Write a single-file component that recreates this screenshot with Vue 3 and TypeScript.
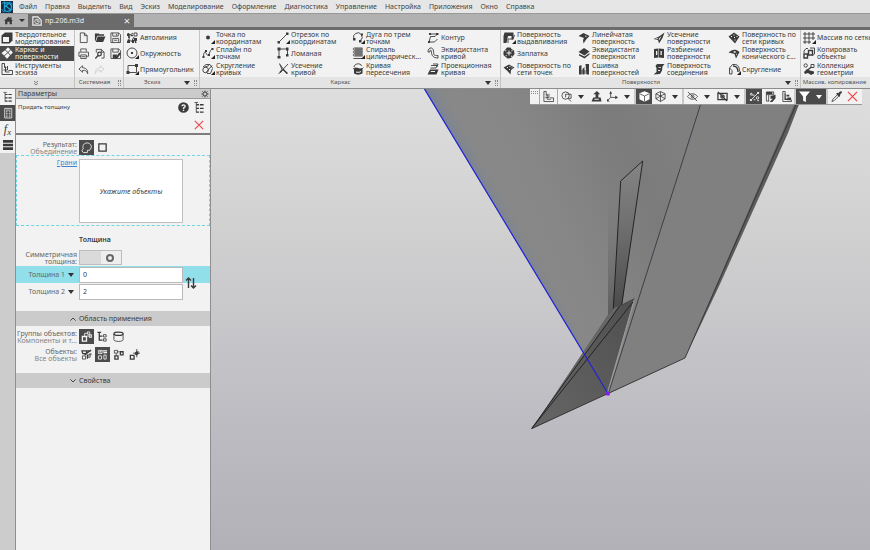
<script setup lang="ts">
import { h, ref, type FunctionalComponent } from 'vue'

interface Glyph {
  /** outlined strokes */
  s?: string
  /** solid shapes */
  f?: string
  /** light details over solid shapes */
  w?: string
  /** heavier stroke */
  b?: string
  /** dark seams over light shapes */
  k?: string
}

const glyphs: Record<string, Glyph> = {
  solid: { f: 'M4 0.5h7.500v8L8.500 11.500H.5V3.500z', w: 'M2 5h6v5H2z' },
  tiles: { f: 'M7 .3l2.300 2.200L7 5 4.500 2.700zM9.800 3l2 2.500L9.500 8 7.500 5.500zM4 3.200l2.500 2.300L3 8.500.5 6zM7 6l2 2.500L6 11.700 3.500 9z' },
  sketch: { s: 'M1 .5v11h10.500V7.500H7.500M4.500 3.500v5.500h4M1 .5h2.500v4h2M6.500 3v4h-4' },
  file: { s: 'M2.500 1h4.500l3 3v7.500h-7.500zM7 1v3h3' },
  folder: { f: 'M1 1.500h4l1 1h5V4H3.500L1.500 10H1zM4 5h8.500L10 11H2z' },
  save: { s: 'M1 1h8.500l2 2v8.500H1zM3 1v3.500h6V1M3 11.500V7h6.500v4.500M7 2v2M4.500 9h3.500' },
  print: { s: 'M3 4V1h6v3M3 9H1V4.500h10.500V9H9M3 7.500h6v4H3zM4 9.500h4' },
  preview: { s: 'M2.500 5V1.500h5.500l3 3v6.500H8M8 1.500v3h3', b: 'M4 6.500a2 2 0 1 0 4 0a2 2 0 1 0-4 0M4.500 8L1.500 11.500' },
  saveas: { s: 'M1 1h8.500l2 2v8.500H1zM3 1v3.500h6V1', f: 'M3 7h5l-2 4.500H3zM10 5l2 1-4 5.500-2 .5.5-2z' },
  undo: { s: 'M5 2L1 5.500 5 9V7c3-.5 4.500.5 5.500 3.500.5-4-1.500-6-5.500-6.500z' },
  redo: { s: 'M7 2l4 3.500L7 9V7C4 6.500 2.500 7.500 1.500 10.500 1 6.500 3 4.500 7 4z' },
  auto: { s: 'M1 2.500h3M2.500 1v5M2 11l2-8 3-2M8 1h3v3H8zM5 10l3-5M8 8.500h3', b: 'M1.500 8.500h3M8 6l2 5M5 3.500h2', f: 'M1 1.500h2.500V4H1zM9 6h2v2H9zM6 8h2v3H6zM1 9h3v2H1z' },
  circle: { s: 'M1 6a5 5 0 1 0 10 0a5 5 0 1 0-10 0', f: 'M5 5h2v2H5z' },
  rect: { s: 'M2 2.500h8.500V9.500H2z', f: 'M.5 8h3v3h-3zM9 1h3v3H9z' },
  dot: { f: 'M4 5.500a2 2 0 1 0 4 0a2 2 0 1 0-4 0' },
  spline: { s: 'M1.500 10c0-5 1.500-6 2.500-4s2 4 3.500 0 1.500-3 3.500-4', f: 'M.5 9h2v2h-2zM3 3h2v2H3zM6 7h2v2H6zM9.500 1h2v2h-2z' },
  round: { s: 'M1 4l3-2.500h4L10.500 5M.8 7a2.800 2.800 0 1 0 5.600 0a2.800 2.800 0 1 0-5.600 0M4 9.500l6-7M5 10.500h3.500l2-5M2 4.500l5-2' },
  line: { s: 'M2 10L10 2', f: 'M.5 9h2.500v2.500H.5zM9 .5h2.500V3H9z' },
  poly: { s: 'M2 10.500V2h8.500v6', f: 'M.5 .5h3v3h-3zM9 .5h2.500v3H9zM.5 9h3v2.500h-3zM9 7h2.500v2.500H9z' },
  trim: { s: 'M2.500 .5l2.500 6M11 1L1.500 11M3 1.500L10 11', b: 'M5.500 6.500L3 9.500M6 6.500l4.500 4' },
  arc: { s: 'M2 7a4.300 4.300 0 1 1 6.500 1.500', f: 'M1 6h2.500v2.500H1zM7 8h2.500v2.500H7zM9 1.500h2v2H9z' },
  spiral: { s: 'M10.500 1H3c-2.500 0-2.500 2 0 2h7.500M10.500 4H3c-2.500 0-2.500 2 0 2h7.500M10.500 7H3c-2.500 0-2.500 2 0 2h7.500M1.500 11.500h9M3 2h8M3 5h8M3 8h8' },
  cross: { s: 'M2 4c0-3.500 7-4.500 7.500-1M1 6C4 3 8 9 11.500 4.500', f: 'M2 6c3-3 5 1 8.500-1v5.500c-3 1.500-6 1.500-8.500 0z', w: 'M4 8.500c1.500.5 3 .5 5-.5v1c-2 1-3.500 1-5 .5z' },
  contour: { s: 'M3 2h7.500L8 4.500H3.500L2 10h5.500l3-3', f: 'M9 1h2.500v2H9zM1 9h2v2H1zM2 1h2v2H2z' },
  offset: { s: 'M1 5c0-5 5-5.500 5.500-1s0 4.500 4.500 4.500M1 5h2c0-3 1.500-2 1.500 0s.5 6 6.500 6V8.500' },
  project: { f: 'M3 6.500h8.500L9.500 11.500H.5z', s: 'M4 2.500h6L9 5H3.500M6 1h5l-1 3M7 9l3-2', w: 'M4 8h4v1H3.500z' },
  extrude: { f: 'M1.500 .5h9v7H8.500V4H5L3.500 11H.5V4z', s: 'M5 11V7h5l1.500-4' },
  patch: { f: 'M4 .5h3.500l1 1.500L11 3.500 11.500 7l-1.500 2-2 2-3.500.5L2 9.500.5 8V4.500L2 3z', w: 'M5.500 3.500h1v2h2v1h-2v2h-1v-2h-2v-1h2zM2.500 3l1 .5-.5 1-1-.5zM9 3l.8.8-.8.7-.8-.7zM8.500 8.500l1 .5-1 1-.7-.7zM3 8l1 .8-.8.7-.7-.7z' },
  points: { f: 'M.5 4.500L6 1.500 11.500 4.500 8 7 7.500 11.500 4.500 8z', w: 'M4 4h1v1H4zM6.500 3h1v1h-1zM6 6h1v1H6zM8.500 4.500h1v.8h-1z' },
  ruled: { f: 'M.5 4l5-3 6 3L8.500 7 5.500 11.500 5 8 6 6z', w: 'M7 3.500l2 .8-1.500.7z' },
  equi: { f: 'M.5 5L6 1l5.500 3.500L6.500 8.500zM1 7l5.500 2.500L11.500 6v1.500L6.500 11.500 1 8.500z' },
  sew: { f: 'M1 3l2.500-1v9.500H1zM4.500 6l2-2v7.500h-2zM7.500 1H11v10.500H8.500z', s: 'M3 8h6M3 10h6' },
  cut: { f: 'M.5 7L6 4.500 11.500.5 9.500 6 6 11.500 5 8z', w: 'M5.500 7L8.500 4l-2 4zM2 7l3-1.300v.8L3 7.300z' },
  split: { f: 'M1 2l4.500-.5v9L1 11zM6 1.500L11 2v9L6 10.500z', w: 'M3 4h1.300v4H3zM7.500 4h1.300v4H7.500z' },
  join: { f: 'M4 1h7.500L9.500 3.500 9 7.500 7 11 .5 11.500 3.500 9V5L2.500 3z', w: 'M5 7h2v1H5zM5.500 4H8v.8H5.500z' },
  mesh: { f: 'M.5 4.500L6 .5l5.500 4L7 11.500z', w: 'M3 4h1v1H3zM5.500 2.500h1v1h-1zM6 5h1v1H6zM8.500 4h1v1h-1zM6.500 7.500h1v1h-1z' },
  cone: { f: 'M.5 5.500C4 3 7 1 11.500 5L8 11.500 6.500 7z', w: 'M5 5l2-1 1 1-1 1zM8 6.500l1 .5L8 8.500z' },
  fillet: { s: 'M1.500 11v-6l3-3.500h3c3 .5 4 3 4 7M4 11V7.500L1.500 5M4 11H1.500', b: 'M5 3c3 0 5 2 5 6' },
  grid: { s: 'M1 1h2v2H1zM5 1h2v2H5zM9 1h2v2H9zM1 5h2v2H1zM5 5h2v2H5zM9 5h2v2H9zM1 9h2v2H1zM5 9h2v2H5z' },
  copy: { s: 'M1 6V4l2-2.500h2M7 1h4.500v6L9.500 8.500', b: 'M5.500 3.500h4v4.500h-4zM1 7h3.500v4H1z' },
  collect: { s: 'M1 2.500a1.700 1.700 0 1 0 3.400 0a1.700 1.700 0 1 0-3.400 0M8 1.500h3v3H8z', f: 'M1 9l3-3 3 1.500 4 1v2l-3 1.500-3-2-3 1z', b: 'M4.500 7l4-3' },
  tree: { s: 'M2.500 1v10.500M4.500 .5h-4', b: 'M2.500 3h3M2.500 7h3M2.500 11h3M6.500 3h4M6.500 7h4M6.500 11h4' },
  params: { s: 'M2 .5h8.500v11.500H2zM3.500 2.500h5.500M3.500 4.500h2M7 4.500h2M3.500 6.500h2M7 6.500h2M3.500 8.500h2M7 8.500h2M3.500 10.500h2M7 10.500h2' },
  stack: { f: 'M0 0h12v3.200H0zM0 4.400h12v3.200H0zM0 8.800h12v3.200H0z' },
  gear: { b: 'M3 6a3 3 0 1 0 6 0a3 3 0 1 0-6 0M6 .8v2M6 9.200v2M.8 6h2M9.200 6h2M2.200 2.200L3.800 3.800M8.200 8.200l1.600 1.600M9.800 2.200L8.200 3.800M3.800 8.200L2.200 9.800' },
  help: { f: 'M.2 6a5.800 5.800 0 1 0 11.600 0a5.800 5.800 0 1 0-11.600 0', w: 'M3.700 4.500C3.700 1.500 8.500 1.800 8.500 4.500c0 1.700-1.800 1.500-1.800 3H5.300c0-2.500 1.700-2 1.700-3S5.300 3.500 5.300 4.500zM5.200 8.500h1.600v1.400H5.200z' },
  close: { b: 'M1 1l10 10M11 1L1 11' },
  union: { s: 'M2.500 11.500L1 9.500C1 8.500 2 8 2.500 7.500 1 4 3.500 1 6.500 1s5.500 2.500 4.500 5.500L9.500 9H7v2.500z' },
  box: { b: 'M2 2h8v8H2z' },
  swap: { b: 'M3.500 11V1M1 3.500L3.500 1 6 3.500M8.500 1v10M6 8.500l2.500 2.500L11 8.500' },
  up: { b: 'M2 8.500L6 4.500 10 8.500' },
  down: { b: 'M2 3.500L6 7.500 10 3.500' },
  chevrons: { b: 'M2 2L6 5.500 10 2M2 6.500l4 3.500 4-3.500' },
  partlink: { b: 'M1.500 6h4.500v5H1.500z', s: 'M4 5.500V2.500h3M6.500 5.500H11M7 1h2.500v2.500H7zM9 4h2.500v3H9z' },
  parttree: { b: 'M.5 1.500h4M2.500 1.500V10H6M2.500 5.500H6', s: 'M7 4h3v2.500H7zM7 8.500h3V11H7z' },
  cylinder: { s: 'M1 3v6.500c0 2.500 10 2.500 10 0V3', b: 'M1 3c0-2.500 10-2.500 10 0s-10 2.500-10 0' },
  objall: { s: 'M1.500 7.500H5V11H1.500zM7.500 6.500H10V9H7.500z', b: 'M1 2h5v3H2zM6 5l5-4M6 2h5M4 6.500l6-5M7 10.500V6M9 5.500h2.500' },
  objvis: { s: 'M1.500 7.500H5V11H1.500zM7.500 6.500H10V11H7.500zM1.500 1.500h4v3.500h-4z', b: 'M6 2h5M7 4h4M2.500 3.200h2' },
  objtwo: { s: 'M1.500 1.500H5V4.500H1.500zM5 3h2M3.500 5v2', b: 'M2 7.500h3.500V11H2zM8 3h3v3.500H8z' },
  objadd: { s: 'M8.500 0v9M4.500 4.500h7.500M6.500 6.500l4-4', f: 'M8.500 2L11 4.500 8.500 7 6 4.500z', b: 'M1.500 7H5.500v4H1.500z' },
  zoom: { s: 'M1 5a4 4 0 1 0 8 0a4 4 0 1 0-8 0M7.500 8l3.500 3.500M5 3.500h6V8H8M5 3.500V7' },
  orient: { f: 'M5 3.500H2.500L6.500 0 10 3.500H8v3.500h2.500L11.500 11.500H.5L2.500 7H5z', w: 'M4 8.500h4.500v1H3.500z' },
  axes: { s: 'M4 7V1.500M4 7L1 10M4 7h7', f: 'M2.500 3L4 0 5.500 3zM9 5l3 2L9 9zM0 8.500l3 3H0z' },
  cube: { f: 'M6 .2L11.500 2.500v6.500L6 11.800 .5 9V2.500z', k: 'M.8 3L6 5.500 11.200 3M6 5.500v6' },
  wire: { s: 'M6 .5L11 3v5.500L6 11.500 1 8.500V3zM1 3l5 2.500L11 3M6 5.500v6M6 .5v5M1 8.500l5-3 5 3' },
  eyeoff: { s: 'M.5 6c3-4 8-4 11 0-3 4-8 4-11 0M1 1l10 10M4.500 6a1.500 1.500 0 1 0 3 0a1.500 1.500 0 1 0-3 0' },
  camoff: { b: 'M1 2.500h10v7H1zM1 1l10 10M4.200 6a1.800 1.800 0 1 0 3.600 0a1.800 1.800 0 1 0-3.600 0' },
  snaps: { s: 'M2 10L10 2M1.500 3.500a1 1 0 1 0 2 0a1 1 0 1 0-2 0M3.500 4.500H6M8 7.500a1.300 1.300 0 1 0 2.600 0a1.300 1.300 0 1 0-2.600 0M5 9.500h2M9 10.500h2', f: 'M1 9h2v2H1zM9 1h2v2H9z' },
  recalc: { s: 'M1.500 1h8v3M1.500 1v10h3M1.500 4h8M4 4v7', f: 'M1.500 1h6.500v2.500h-6.500zM6 5.500l5.500-1.500v4l-3.500 4H5L8.500 8.500H6z' },
  section: { s: 'M2 .5v11h9.500V9.500M2 .5h2.500v3', b: 'M4.500 3v6h4', f: 'M6 4h3v2H6zM7 7h4v3H7z' },
  funnel: { f: 'M0 .5h12L7.500 6v6L4.500 10.500V6z' },
  dropper: { s: 'M7.500 3.500L2 9l-1 2.500L3.500 10.500 9 5', f: 'M5.500 3l1.500-1 1 .5C9 .5 11-.2 11.700.4c.6 1-.2 2.600-2 3.600l.5 1-1.200 1.500z' },
  home: { f: 'M0 6.500L6 1l2 1.800V1.500h2v3L12 6.500h-1.500V11H7.500V7.500h-3V11H1.500V6.500z' },
  logo: { s: 'M.5 3l3-2.500M9 .5l2.500 3M11.500 8L8 11.500M3 11.500L.5 8', b: 'M3.500 1v9.500M3.500 6L9 1.500M5 5l5 4.500M3 3.500c3-3.500 8-1 7.500 3S5.500 11.500 3 9' },
  doc: { b: 'M1 11V1h6l4 4v6z', s: 'M3.300 6.500a2.700 2.700 0 1 0 5.400 0a2.700 2.700 0 1 0-5.400 0M6 4.500v2h2' },
}

const Icon: FunctionalComponent<{ name: string }> = (props) => {
  const g = glyphs[props.name]
  return h('svg', { class: 'icon', viewBox: '0 0 12 12', 'aria-hidden': 'true' }, [
    g.s ? h('path', { d: g.s, fill: 'none', stroke: 'currentColor', 'stroke-width': 0.9 }) : null,
    g.b ? h('path', { d: g.b, fill: 'none', stroke: 'currentColor', 'stroke-width': 1.4 }) : null,
    g.f ? h('path', { d: g.f, fill: 'currentColor' }) : null,
    g.w ? h('path', { d: g.w, fill: '#f2f2f2' }) : null,
    g.k ? h('path', { d: g.k, fill: 'none', stroke: '#4b4b4b', 'stroke-width': 0.9 }) : null,
  ])
}
Icon.props = ['name']

interface Command {
  icon: string
  label: string
  more?: boolean
}
interface Group {
  title: string
  kind: string
  menu: boolean
  items: Command[]
}

const c = (icon: string, label: string, more = false): Command => ({ icon, label, more })

const menu = ['Файл', 'Правка', 'Выделить', 'Вид', 'Эскиз', 'Моделирование', 'Оформление', 'Диагностика', 'Управление', 'Настройка', 'Приложения', 'Окно', 'Справка']

const modes = [
  c('solid', 'Твердотельное\nмоделирование'),
  c('tiles', 'Каркас и\nповерхности'),
  c('sketch', 'Инструменты\nэскиза'),
]
const activeMode = ref(1)

const systemTools = [
  c('file', 'Создать'), c('folder', 'Открыть'), c('save', 'Сохранить'),
  c('print', 'Печать'), c('preview', 'Просмотр'), c('saveas', 'Сохранить как'),
  c('undo', 'Отменить'), c('redo', 'Повторить'),
]

const groups: Group[] = [
  {
    title: 'Эскиз', kind: 'one', menu: true,
    items: [c('auto', 'Автолиния'), c('circle', 'Окружность', true), c('rect', 'Прямоугольник', true)],
  },
  {
    title: 'Каркас', kind: 'four', menu: true,
    items: [
      c('dot', 'Точка по\nкоординатам', true), c('spline', 'Сплайн по\nточкам', true), c('round', 'Скругление\nкривых', true),
      c('line', 'Отрезок по\nкоординатам', true), c('poly', 'Ломаная'), c('trim', 'Усечение\nкривой'),
      c('arc', 'Дуга по трем\nточкам', true), c('spiral', 'Спираль\nцилиндрическ...', true), c('cross', 'Кривая\nпересечения'),
      c('contour', 'Контур'), c('offset', 'Эквидистанта\nкривой'), c('project', 'Проекционная\nкривая'),
    ],
  },
  {
    title: 'Поверхности', kind: 'four', menu: true,
    items: [
      c('extrude', 'Поверхность\nвыдавливания', true), c('patch', 'Заплатка'), c('points', 'Поверхность по\nсети точек'),
      c('ruled', 'Линейчатая\nповерхность'), c('equi', 'Эквидистанта\nповерхности'), c('sew', 'Сшивка\nповерхностей'),
      c('cut', 'Усечение\nповерхности'), c('split', 'Разбиение\nповерхности'), c('join', 'Поверхность\nсоединения'),
      c('mesh', 'Поверхность по\nсети кривых'), c('cone', 'Поверхность\nконического с...'), c('fillet', 'Скругление', true),
    ],
  },
  {
    title: 'Массив, копирование', kind: 'rest', menu: false,
    items: [c('grid', 'Массив по сетке', true), c('copy', 'Копировать\nобъекты'), c('collect', 'Коллекция\nгеометрии')],
  },
]

interface Tool {
  icon: string
  label: string
  kind?: 'arrow' | 'sep'
  on?: boolean
  red?: boolean
}
const t = (icon: string, label: string, on = false): Tool => ({ icon, label, on })
const arrow = (label: string, on = false): Tool => ({ icon: '', label, kind: 'arrow', on })
const sep: Tool = { icon: '', label: '', kind: 'sep' }

const viewTools: Tool[] = [
  t('zoom', 'Масштаб'), arrow('Варианты масштаба'), t('orient', 'Нормально к'), t('axes', 'Ориентация'), arrow('Варианты ориентации'), sep,
  t('cube', 'Полутоновое', true), t('wire', 'Каркас'), arrow('Варианты каркаса'), sep,
  t('eyeoff', 'Скрыть'), arrow('Варианты скрытия'), t('camoff', 'Скрыть вид'), arrow('Варианты вида'), sep,
  t('snaps', 'Привязки', true), t('recalc', 'Перестроить'), t('section', 'Сечение'), sep,
  t('funnel', 'Фильтр', true), arrow('Варианты фильтра', true), sep,
  t('dropper', 'Пипетка'), { icon: 'close', label: 'Закрыть', red: true },
]

const symmetric = ref(false)
const thickness1 = ref('0')
const thickness2 = ref('2')
</script>

<template>
  <div class="app">
    <nav class="menu">
      <span class="logo"><Icon name="logo" /></span>
      <button v-for="m in menu" :key="m" type="button">{{ m }}</button>
    </nav>

    <div class="tabs">
      <button class="home" type="button" aria-label="Главная"><Icon name="home" /></button>
      <button class="home-menu" type="button" aria-label="Список документов"><i class="caret"></i></button>
      <div class="tab">
        <Icon name="doc" />
        <span>пр.206.m3d</span>
        <button type="button" aria-label="Закрыть вкладку">×</button>
      </div>
    </div>

    <header class="ribbon">
      <section class="group modes">
        <div class="cells">
          <button v-for="(m, i) in modes" :key="m.label" type="button" class="cmd" :class="{ active: i === activeMode }" @click="activeMode = i">
            <Icon :name="m.icon" /><span>{{ m.label }}</span>
          </button>
        </div>
        <footer><Icon name="chevrons" /></footer>
      </section>
      <section class="group system">
        <div class="cells">
          <button v-for="s in systemTools" :key="s.icon" type="button" :aria-label="s.label" :disabled="s.icon === 'redo'"><Icon :name="s.icon" /></button>
        </div>
        <footer><span>Системная</span><i class="grip"></i></footer>
      </section>
      <section v-for="g in groups" :key="g.title" class="group" :class="g.kind">
        <div class="cells">
          <button v-for="i in g.items" :key="i.label" type="button" class="cmd" :class="{ more: i.more }">
            <Icon :name="i.icon" /><span>{{ i.label }}</span>
          </button>
        </div>
        <footer>
          <span>{{ g.title }}</span>
          <template v-if="g.menu"><i class="caret"></i><i class="grip"></i></template>
        </footer>
      </section>
    </header>

    <div class="work">
      <aside class="rail">
        <button type="button" aria-label="Дерево"><Icon name="tree" /></button>
        <button type="button" aria-label="Параметры" class="active"><Icon name="params" /></button>
        <button type="button" aria-label="Переменные" class="fx"><i>f</i><sub>x</sub></button>
        <button type="button" aria-label="Слои"><Icon name="stack" /></button>
      </aside>

      <aside class="panel">
        <h2>Параметры<Icon name="gear" /></h2>
        <div class="command">
          <span>Придать толщину</span>
          <button type="button" aria-label="Справка"><Icon name="help" /></button>
          <button type="button" aria-label="Дерево"><Icon name="tree" /></button>
          <button type="button" aria-label="Отмена" class="cancel"><Icon name="close" /></button>
        </div>

        <div class="row result">
          <div class="label">Результат:<br><em>Объединение</em></div>
          <div class="opts">
            <button type="button" class="active" aria-label="Объединение"><Icon name="union" /></button>
            <button type="button" aria-label="Новое тело"><Icon name="box" /></button>
          </div>
        </div>

        <div class="row faces">
          <div class="label"><a href="#faces">Грани</a></div>
          <div id="faces" class="list">Укажите объекты</div>
        </div>

        <h3>Толщина</h3>
        <div class="row sym">
          <label class="label" for="sym">Симметричная<br>толщина:</label>
          <input id="sym" v-model="symmetric" type="checkbox" role="switch">
        </div>
        <div class="thickness">
          <div class="row field active">
            <div class="label"><label for="t1">Толщина 1</label><button type="button" aria-label="Варианты толщины 1"><i class="caret"></i></button></div>
            <input id="t1" v-model="thickness1" type="text">
          </div>
          <div class="row field">
            <div class="label"><label for="t2">Толщина 2</label><button type="button" aria-label="Варианты толщины 2"><i class="caret"></i></button></div>
            <input id="t2" v-model="thickness2" type="text">
          </div>
          <button class="swap" type="button" aria-label="Поменять местами"><Icon name="swap" /></button>
        </div>

        <button type="button" class="fold"><Icon name="up" />Область применения</button>
        <div class="row scope">
          <div class="label">Группы объектов:<br><em>Компоненты и т...</em></div>
          <div class="opts">
            <button type="button" class="active" aria-label="Компоненты и тела"><Icon name="partlink" /></button>
            <button type="button" aria-label="Компоненты"><Icon name="parttree" /></button>
            <button type="button" aria-label="Тела"><Icon name="cylinder" /></button>
          </div>
        </div>
        <div class="row scope">
          <div class="label">Объекты:<br><em>Все объекты</em></div>
          <div class="opts">
            <button type="button" aria-label="Автоопределение"><Icon name="objall" /></button>
            <button type="button" class="active" aria-label="Все объекты"><Icon name="objvis" /></button>
            <button type="button" aria-label="Выбрать"><Icon name="objtwo" /></button>
            <button type="button" aria-label="Добавить"><Icon name="objadd" /></button>
          </div>
        </div>
        <button type="button" class="fold"><Icon name="down" />Свойства</button>
      </aside>

      <main class="viewport">
        <svg class="model" viewBox="211 89 659 461" preserveAspectRatio="xMinYMin slice" aria-hidden="true">
          <defs>
            <linearGradient id="hull" gradientUnits="userSpaceOnUse" x1="515" y1="230" x2="680" y2="160">
              <stop offset="0" stop-color="#888888" />
              <stop offset=".25" stop-color="#878787" />
              <stop offset=".75" stop-color="#7b7b7b" />
              <stop offset="1" stop-color="#7f7f7f" />
            </linearGradient>
            <linearGradient id="glow" gradientUnits="userSpaceOnUse" x1="470" y1="165" x2="484" y2="157">
              <stop offset="0" stop-color="#75839c" stop-opacity=".7" />
              <stop offset="1" stop-color="#858585" stop-opacity="0" />
            </linearGradient>
            <linearGradient id="blade" x1="0" y1="0" x2="0" y2="1">
              <stop offset="0" stop-color="#858585" />
              <stop offset=".45" stop-color="#6f6f6f" />
              <stop offset="1" stop-color="#4b4b4b" />
            </linearGradient>
            <linearGradient id="shade" x1="0" y1="0" x2="0" y2="1">
              <stop offset="0" stop-color="#808080" stop-opacity="0" />
              <stop offset="1" stop-color="#5c5c5c" />
            </linearGradient>
            <linearGradient id="fin" x1="0" y1="1" x2="1" y2="0">
              <stop offset="0" stop-color="#666" />
              <stop offset="1" stop-color="#505050" />
            </linearGradient>
          </defs>
          <path d="M424 89H706L608 394z" fill="url(#hull)" />
          <path d="M424 89H450L546 270 590 364z" fill="url(#glow)" />
          <path d="M705 89H803L685 358 608 394z" fill="#808080" />
          <path d="M801 89H806L798 107 788 133 720 284 685 358z" fill="#5c5c5c" />
          <path d="M608 190L620 181 614 308 608 316z" fill="url(#shade)" />
          <path d="M620.700 181L642.700 161 622 306 613 309z" fill="url(#blade)" />
          <path d="M532 429L608 315 613 308 621 305 634 299 607 394z" fill="url(#fin)" />
          <path d="M532 429L608 315 614 308 619 306z" fill="#666" />
          <path d="M607 394L634 301 608 394z" fill="#999" stroke="#999" stroke-width=".8" />
          <g fill="none" stroke="#1d1d1d" stroke-width=".9">
            <path d="M613.300 308.500L620.700 181 642.700 161 621.700 305" />
            <path d="M620 305.500L531.700 428.500 633 302" />
            <path d="M634.500 298.500L621 305.500" stroke="#444" />
            <path d="M531.700 428.500L608 393.500 685 358 796 105" stroke="#333" />
            <path d="M705.500 89L608.500 393" stroke="#333842" />
          </g>
          <path d="M424.500 89L608 393.500" fill="none" stroke="#2222d8" stroke-width="1.200" />
          <path d="M606.300 392h3.500v3.500h-3.500z" fill="#8a16ff" />
        </svg>

        <div class="toolbar" role="toolbar">
          <i class="dots"></i>
          <button type="button" class="lead" aria-label="Эскиз"><Icon name="sketch" /></button>
          <template v-for="(b, i) in viewTools" :key="i">
            <i v-if="b.kind === 'sep'" class="sep"></i>
            <button v-else type="button" :aria-label="b.label" :class="{ arrow: b.kind === 'arrow', on: b.on, red: b.red }">
              <i v-if="b.kind === 'arrow'" class="caret"></i>
              <Icon v-else :name="b.icon" />
            </button>
          </template>
        </div>
      </main>
    </div>
  </div>
</template>

<style>
body {
  margin: 0;
}
</style>

<style scoped>
.app {
  display: flex;
  flex-direction: column;
  height: 100vh;
  overflow: hidden;
  font-family: "Noto Sans", "Open Sans", sans-serif;
  font-size: 7px;
  line-height: 7px;
  color: #3b3b3b;
  background: #f2f2f2;
}
button, input {
  font: inherit;
  color: inherit;
  box-sizing: border-box;
}
button {
  display: flex;
  align-items: center;
  padding: 0;
  border: 0;
  background: none;
}
.icon {
  display: block;
  flex: none;
  width: 12px;
  height: 12px;
  overflow: visible;
}
.caret {
  flex: none;
  border: 3px solid transparent;
  border-top: 4px solid #333;
  border-bottom: 0;
}
.grip {
  width: 3px;
  height: 6px;
  border: dotted #888;
  border-width: 0 1px;
  box-sizing: border-box;
}

.menu {
  flex: none;
  display: flex;
  align-items: center;
  gap: 8px;
  height: 13px;
  background: #e6e6e6;
  border-bottom: 1px solid #999;
  color: #444;
}
.logo {
  margin-left: 1px;
  margin-right: -2px;
  background: #14293a;
  color: #1fa0d8;
}

.tabs {
  flex: none;
  display: flex;
  height: 13px;
  background: #b1b1b1;
  border-bottom: 3px solid #6b6b6b;
}
.home {
  width: 16px;
  justify-content: center;
}
.home .icon {
  width: 9px;
  height: 9px;
}
.home-menu {
  width: 12px;
  justify-content: center;
}
.home-menu .caret {
  border-top-width: 3px;
}
.tab {
  display: flex;
  align-items: center;
  gap: 3px;
  width: 106px;
  padding: 0 4px;
  box-sizing: border-box;
  background: #6b6b6b;
  color: #f0f0f0;
}
.tab .icon {
  width: 10px;
  height: 10px;
}
.tab button {
  margin-left: auto;
  font-size: 11px;
}

.ribbon {
  flex: none;
  display: flex;
  border-bottom: 1px solid #8c8c8c;
}
.group {
  flex: none;
  display: flex;
  flex-direction: column;
  border-right: 1px solid #c4c4c4;
}
.cells {
  display: grid;
  grid-template-rows: repeat(3, 1fr);
  grid-auto-flow: column;
  grid-auto-columns: 75px;
  height: 47px;
}
.group footer {
  position: relative;
  display: flex;
  align-items: center;
  justify-content: flex-end;
  gap: 4px;
  height: 11px;
  padding-right: 2px;
  background: #e4e4e4;
  font-size: 6px;
  color: #555;
}
.group footer span {
  flex: 1;
  text-align: center;
  white-space: nowrap;
}
.modes .cells {
  grid-auto-columns: 74px;
}
.modes .cmd {
  padding-left: 1px;
}
.modes footer {
  justify-content: center;
}
.modes footer .icon {
  width: 6px;
  height: 6px;
}
.system .cells {
  grid-auto-flow: row;
  grid-template-columns: repeat(3, 16px);
}
.system .cells button {
  justify-content: center;
}
.system .cells button:disabled {
  color: #ccc;
}
.system .icon {
  width: 11px;
  height: 11px;
}
.one .cells {
  grid-auto-columns: 75px;
}
.four .cells {
  grid-template-columns: repeat(4, 75px);
}
.four + .four .cells {
  grid-template-columns: repeat(3, 75px) 74px;
}
.rest {
  flex: 1;
  min-width: 0;
  overflow: hidden;
  border-right: 0;
}
.rest .cells {
  grid-auto-columns: 1fr;
}
.cmd {
  position: relative;
  gap: 2px;
  padding-left: 2px;
  min-width: 0;
  text-align: left;
  white-space: pre;
}
.cmd.active {
  background: #4b4b4b;
  color: #f5f5f5;
}
.cmd.more::after {
  content: "";
  position: absolute;
  left: 11px;
  bottom: 2px;
  border-left: 4px solid transparent;
  border-bottom: 4px solid #222;
}

.work {
  flex: 1;
  min-height: 0;
  display: flex;
}
.rail {
  flex: none;
  width: 15px;
  background: #cccccc;
}
.rail button {
  width: 100%;
  height: 16px;
  justify-content: center;
  background: #f2f2f2;
}
.rail .icon {
  width: 10px;
  height: 10px;
}
.rail .active, .opts .active {
  background: #4b4b4b;
  color: #f5f5f5;
}
.rail .fx {
  font: italic 12px/12px "Liberation Serif", serif;
}
.fx sub {
  align-self: flex-end;
  font-size: 9px;
  line-height: 9px;
}

.panel {
  flex: none;
  width: 194px;
  border: solid #8e8e8e;
  border-width: 0 1px;
}
.panel h2 {
  display: flex;
  align-items: center;
  justify-content: space-between;
  height: 9px;
  margin: 0;
  padding: 0 1px 0 2px;
  border-bottom: 1px solid #999;
  background: #cbcbcb;
  font-size: 7px;
  font-weight: 400;
}
.panel h2 .icon {
  width: 8px;
  height: 8px;
}
.command {
  display: grid;
  grid-template-columns: 1fr 12px 12px;
  grid-template-rows: 16px 16px;
  align-items: center;
  column-gap: 4px;
  height: 34px;
  padding: 0 4px 0 2px;
  border-bottom: 2px solid #7d7d7d;
  font-size: 6px;
}
.command .icon {
  width: 11px;
  height: 11px;
}
.command .cancel {
  grid-column: 3;
  margin-top: 4px;
}
.cancel .icon, .red .icon {
  width: 10px;
  height: 10px;
}
.cancel, .red {
  color: #f04848;
}
.row {
  display: grid;
  grid-template-columns: 61px 104px;
  column-gap: 2px;
  align-items: center;
}
.label {
  text-align: right;
  white-space: nowrap;
  color: #666;
}
.label em {
  font-style: normal;
  color: #858585;
}
.opts {
  display: flex;
  gap: 1px;
}
.opts button {
  width: 15px;
  height: 15px;
  justify-content: center;
}
.opts .icon {
  width: 11px;
  height: 11px;
}
.result {
  padding-top: 5px;
}
.faces {
  align-items: start;
  padding: 3px 0 2px;
  border: 1px dashed #6fd5e6;
  grid-template-columns: 60px 104px;
}
.faces a {
  color: #3b83cf;
}
.list {
  display: flex;
  align-items: center;
  justify-content: center;
  height: 62px;
  border: 1px solid #c0c0c0;
  background: #fff;
  font-style: italic;
}
.panel h3 {
  margin: 10px 0 6px 63px;
  font-size: 7px;
  line-height: 8px;
  font-weight: 600;
}
.sym {
  margin-bottom: 1px;
}
#sym {
  appearance: none;
  position: relative;
  width: 43px;
  height: 15px;
  margin: 0;
  border: 1px solid #bdbdbd;
  background: linear-gradient(90deg, #dadada 50%, #eeeeee 50%);
}
#sym::after {
  content: "";
  position: absolute;
  right: 7px;
  top: 3px;
  width: 4px;
  height: 4px;
  border: 2px solid #666;
  border-radius: 50%;
}
#sym:checked::after {
  right: 28px;
}
.thickness {
  position: relative;
}
.field {
  height: 17px;
}
.field.active {
  background: #91dfeb;
}
.field .label {
  display: flex;
  align-items: center;
  justify-content: flex-end;
  gap: 3px;
  padding-right: 3px;
}
.field input {
  width: 104px;
  height: 16px;
  padding: 0 3px;
  border: 1px solid #b9b9b9;
  background: #fff;
}
.swap {
  position: absolute;
  left: 169px;
  top: 11px;
}
.fold {
  width: 100%;
  height: 15px;
  margin-top: 11px;
  gap: 2px;
  padding-left: 53px;
  background: #cbcbcb;
}
.fold .icon {
  width: 8px;
  height: 8px;
}
.scope {
  padding-top: 3px;
}

.viewport {
  position: relative;
  flex: 1;
  min-width: 0;
  background: linear-gradient(180deg, #dedede 0%, #d3d3d3 25%, #c8c7ca 49%, #bcbbc1 74%, #b1b1b7 100%);
}
.model {
  display: block;
  width: 100%;
  height: 100%;
}
.toolbar {
  position: absolute;
  top: 0;
  right: 8px;
  display: flex;
  height: 15px;
  padding-right: 2px;
  border-bottom: 1px solid #999;
  background: #f2f2f2;
}
.toolbar button {
  width: 16px;
  justify-content: center;
}
.toolbar .icon {
  width: 11px;
  height: 11px;
}
.toolbar .arrow {
  width: 14px;
}
.toolbar .lead {
  width: 19px;
  border: solid #aaa;
  border-width: 0 1px;
}
.toolbar .on {
  background: #4b4b4b;
  color: #fff;
}
.toolbar .on .caret {
  border-top-color: #fff;
}
.dots {
  width: 7px;
  height: 3px;
  margin: 2px 1px;
  border: dotted #888;
  border-width: 1px 0;
  box-sizing: border-box;
}
.sep {
  width: 2px;
  background: #c9c9c9;
}
</style>
